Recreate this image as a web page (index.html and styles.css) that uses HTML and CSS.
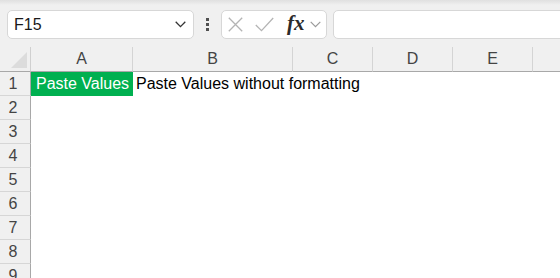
FILE: index.html
```html
<!DOCTYPE html>
<html lang="en">
<head>
<meta charset="utf-8">
<title>Paste Values</title>
<link rel="stylesheet" href="styles.css">
</head>
<body>
<div class="app">
  <div class="toolbar">
    <div class="namebox">
      <span class="name">F15</span>
      <svg class="chev" width="11" height="7" viewBox="0 0 11 7"><path d="M0.7 0.8 L5.5 5.6 L10.3 0.8" fill="none" stroke="#333" stroke-width="1.3"/></svg>
    </div>
    <div class="grip"><span></span><span></span><span></span></div>
    <div class="fxbox">
      <svg class="ico-x" width="15" height="15" viewBox="0 0 15 15"><path d="M0.8 0.8 L14.2 14.2 M14.2 0.8 L0.8 14.2" fill="none" stroke="#b4b4b4" stroke-width="1.3"/></svg>
      <svg class="ico-ok" width="19" height="15" viewBox="0 0 19 15"><path d="M0.8 8 L6.5 13.6 L18.2 1" fill="none" stroke="#b4b4b4" stroke-width="1.3"/></svg>
      <span class="fx">fx</span>
      <svg class="chev2" width="11" height="7" viewBox="0 0 11 7"><path d="M0.7 0.8 L5.5 5.6 L10.3 0.8" fill="none" stroke="#9a9a9a" stroke-width="1.2"/></svg>
    </div>
    <div class="formula"></div>
  </div>
  <div class="sheet">
    <div class="corner"><svg width="16" height="16" viewBox="0 0 16 16"><path d="M16 0 L16 16 L0 16 Z" fill="#dcdcdc"/></svg></div>
    <div class="colhead">A</div>
    <div class="colhead">B</div>
    <div class="colhead">C</div>
    <div class="colhead">D</div>
    <div class="colhead">E</div>
    <div class="colhead last"></div>

    <div class="rowhead">1</div>
    <div class="cell green">Paste Values</div>
    <div class="cell">Paste Values without formatting</div>
    <div class="cell"></div><div class="cell"></div><div class="cell"></div><div class="cell"></div>

    <div class="rowhead">2</div><div class="cell"></div><div class="cell"></div><div class="cell"></div><div class="cell"></div><div class="cell"></div><div class="cell"></div>
    <div class="rowhead">3</div><div class="cell"></div><div class="cell"></div><div class="cell"></div><div class="cell"></div><div class="cell"></div><div class="cell"></div>
    <div class="rowhead">4</div><div class="cell"></div><div class="cell"></div><div class="cell"></div><div class="cell"></div><div class="cell"></div><div class="cell"></div>
    <div class="rowhead">5</div><div class="cell"></div><div class="cell"></div><div class="cell"></div><div class="cell"></div><div class="cell"></div><div class="cell"></div>
    <div class="rowhead">6</div><div class="cell"></div><div class="cell"></div><div class="cell"></div><div class="cell"></div><div class="cell"></div><div class="cell"></div>
    <div class="rowhead">7</div><div class="cell"></div><div class="cell"></div><div class="cell"></div><div class="cell"></div><div class="cell"></div><div class="cell"></div>
    <div class="rowhead">8</div><div class="cell"></div><div class="cell"></div><div class="cell"></div><div class="cell"></div><div class="cell"></div><div class="cell"></div>
    <div class="rowhead">9</div><div class="cell"></div><div class="cell"></div><div class="cell"></div><div class="cell"></div><div class="cell"></div><div class="cell"></div>
  </div>
</div>
</body>
</html>
```
FILE: styles.css
```css
* { box-sizing: border-box; }
html, body {
  margin: 0;
  padding: 0;
  width: 560px;
  height: 278px;
  overflow: hidden;
  background: #ffffff;
  font-family: "Liberation Sans", Arial, sans-serif;
}
.app {
  display: flex;
  flex-direction: column;
}
.toolbar {
  height: 47px;
  display: flex;
  align-items: flex-start;
  padding: 10px 0 0 7px;
  background: linear-gradient(#e0e0e0 0px, #e9e9e9 3px, #f0f0f0 5px, #f0f0f0 100%);
  overflow: hidden;
}
.namebox {
  width: 187px;
  height: 29px;
  flex: none;
  display: flex;
  align-items: center;
  justify-content: space-between;
  padding: 0 7px 0 6px;
  background: #fff;
  border: 1px solid #d7d7d7;
  border-radius: 5px;
}
.name {
  font-size: 16px;
  color: #1a1a1a;
}
.chev { display: block; }
.grip {
  width: 27px;
  height: 29px;
  flex: none;
  display: flex;
  flex-direction: column;
  align-items: center;
  justify-content: center;
  gap: 2px;
}
.grip span {
  width: 3px;
  height: 3px;
  background: #505050;
}
.fxbox {
  width: 106px;
  height: 29px;
  flex: none;
  display: flex;
  align-items: center;
  padding-left: 6px;
  background: #fff;
  border: 1px solid #d7d7d7;
  border-radius: 5px;
}
.ico-x { display: block; margin-right: 12px; }
.ico-ok { display: block; margin-right: 13px; }
.fx {
  font-family: "Liberation Serif", "DejaVu Serif", serif;
  font-style: italic;
  font-weight: bold;
  font-size: 21px;
  color: #2b2b2b;
  line-height: 1;
  margin-top: -2px;
  margin-right: 5px;
}
.chev2 { display: block; }
.formula {
  margin-left: 6px;
  width: 300px;
  height: 29px;
  flex: none;
  background: #fff;
  border: 1px solid #d7d7d7;
  border-radius: 5px;
}
.sheet {
  display: grid;
  grid-template-columns: 31px 102px 160px 80px 80px 80px 1fr;
  grid-template-rows: 25px;
  grid-auto-rows: 24px;
  background: #fff;
}
.corner {
  background: #f0f0f0;
  border-right: 1px solid #d0d0d0;
  border-bottom: 1px solid #a8a8a8;
  display: flex;
  align-items: flex-end;
  justify-content: flex-end;
  padding: 0 3px 3px 0;
}
.corner svg { display: block; }
.colhead {
  background: #f0f0f0;
  border-right: 1px solid #d4d4d4;
  border-bottom: 1px solid #a8a8a8;
  display: flex;
  align-items: center;
  justify-content: center;
  font-size: 16px;
  color: #444;
}
.colhead.last { border-right: none; }
.rowhead {
  background: #f0f0f0;
  border-right: 1px solid #a8a8a8;
  border-bottom: 1px solid #d6d6d6;
  display: flex;
  align-items: center;
  justify-content: center;
  padding-right: 4px;
  font-size: 16px;
  color: #444;
}
.cell {
  display: flex;
  align-items: center;
  padding-left: 3px;
  font-size: 16px;
  color: #000;
  white-space: nowrap;
  overflow: visible;
  min-width: 0;
}
.cell.green {
  background: #00b050;
  color: #fff;
  padding-left: 5px;
}
```
